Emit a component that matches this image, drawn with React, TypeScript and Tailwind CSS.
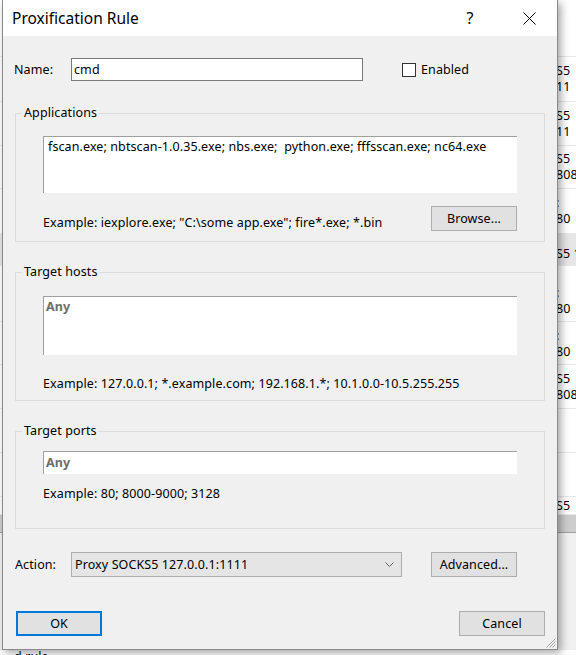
import React from "react";

type Row = { h: number; a?: string; b?: string; band?: boolean; end?: boolean };

// rows of the window behind the dialog (only its right edge shows)
const backRows: Row[] = [
  { h: 57 },
  { h: 45, a: "S5", b: "11" },
  { h: 44, a: "S5", b: "11" },
  { h: 43, a: "S5", b: "808" },
  { h: 45, a: ":", b: "80" },
  { h: 32, a: "S5 1", band: true },
  { h: 56, a: ":", b: "80", end: true },
  { h: 43, a: ":", b: "80", end: true },
  { h: 44, a: "S5", b: "808" },
  { h: 44 },
  { h: 44 },
  { h: 18, a: "S5" },
];

function Button({ label, primary, className = "" }: { label: string; primary?: boolean; className?: string }) {
  return (
    <div
      className={`flex h-[25px] w-[86px] items-center justify-center bg-[#e1e1e1] text-black ${
        primary ? "border-2 border-[#0078d7]" : "border border-[#adadad]"
      } ${className}`}
    >
      {label}
    </div>
  );
}

function Group({ title, children, className = "" }: { title: string; children: React.ReactNode; className?: string }) {
  return (
    <fieldset className={`mx-[12px] border border-[#dcdcdc] px-[27px] ${className}`}>
      <legend className="ml-[-21px] px-[2px] leading-[16px] text-black">{title}</legend>
      {children}
    </fieldset>
  );
}

export default function App() {
  return (
    <div className="relative h-[655px] w-[576px] overflow-hidden bg-white font-['Noto_Sans',sans-serif] text-[12.5px] leading-[16px] tracking-[0.1px] text-black">
      {/* window behind */}
      <div className="flex h-[650px] flex-col">
        {backRows.map((r, i) => (
          <div
            key={i}
            style={{ height: r.h }}
            className={`flex shrink-0 flex-col whitespace-nowrap border-b border-[#e8e8e8] pl-[556px] ${
              r.band ? "justify-end bg-[#e6e6e6] pb-[3px]" : r.end ? "justify-end pb-[4px]" : "justify-center"
            }`}
          >
            {r.a && <span>{r.a}</span>}
            {r.b && <span>{r.b}</span>}
          </div>
        ))}
        <div className="h-[17px] shrink-0 bg-[#cdcdcd]" />
        <div className="flex-1 border-t border-[#a0a0a0] bg-[#f0f0f0]" />
      </div>
      <div className="pl-[14px] leading-[14px]">d rule.</div>

      {/* dialog */}
      <div className="absolute left-[2px] top-0 flex h-[650px] w-[556px] flex-col border-x border-b border-[#8a8a8a] bg-[#f0f0f0] shadow-[3px_3px_8px_rgba(0,0,0,0.35)]">
        <div className="flex h-[36px] shrink-0 items-center bg-white pl-[9px] pr-[5px]">
          <span className="flex-1 text-[15.5px] tracking-normal">Proxification Rule</span>
          <span className="flex w-[46px] justify-center text-[16px]">?</span>
          <span className="ml-[13px] flex w-[46px] justify-center">
            <svg width="13" height="13" viewBox="0 0 13 13">
              <path d="M0.5 0.5 L12.5 12.5 M12.5 0.5 L0.5 12.5" stroke="#000" strokeWidth="1" />
            </svg>
          </span>
        </div>

        <div className="mt-[22px] flex h-[23px] items-center pl-[11px]">
          <span className="w-[57px]">Name:</span>
          <div className="flex h-[23px] w-[292px] items-center border border-[#7a7a7a] bg-white px-[2px]">cmd</div>
          <div className="ml-[39px] h-[14px] w-[14px] border border-[#333] bg-white" />
          <span className="ml-[5px]">Enabled</span>
        </div>

        <Group title="Applications" className="mt-[24px] pb-[10px]">
          <div className="mt-[15px] h-[57px] border-l border-t border-[#a0a0a0] bg-white px-[4px] pt-[2px]">
            fscan.exe; nbtscan-1.0.35.exe; nbs.exe;&nbsp; python.exe; fffsscan.exe; nc64.exe
          </div>
          <div className="mt-[13px] flex items-end justify-between">
            <span>Example: iexplore.exe; "C:\some app.exe"; fire*.exe; *.bin</span>
            <Button label="Browse..." />
          </div>
        </Group>

        <Group title="Target hosts" className="mt-[22px] pb-[8px]">
          <div className="mt-[16px] h-[59px] border-l border-t border-[#a0a0a0] bg-white px-[2px] pt-[2px] font-bold text-[#6d6d6d]">
            Any
          </div>
          <div className="mt-[21px]">Example: 127.0.0.1; *.example.com; 192.168.1.*; 10.1.0.0-10.5.255.255</div>
        </Group>

        <Group title="Target ports" className="mt-[22px] pb-[26px]">
          <div className="mt-[12px] flex h-[23px] items-center border-l border-t border-[#a0a0a0] bg-white px-[2px] font-bold text-[#6d6d6d]">
            Any
          </div>
          <div className="mt-[12px]">Example: 80; 8000-9000; 3128</div>
        </Group>

        <div className="mt-[23px] flex items-center pl-[12px]">
          <span className="w-[56px]">Action:</span>
          <div className="flex h-[25px] w-[331px] items-center border border-[#adadad] bg-[#e5e5e5] pl-[3px] pr-[7px]">
            <span className="flex-1">Proxy SOCKS5 127.0.0.1:1111</span>
            <svg width="9" height="5" viewBox="0 0 9 5">
              <path d="M0.5 0.5 L4.5 4.5 L8.5 0.5" fill="none" stroke="#606060" strokeWidth="1" />
            </svg>
          </div>
          <Button label="Advanced..." className="ml-[29px]" />
        </div>

        <div className="mt-[34px] flex justify-between pl-[13px] pr-[12px]">
          <Button label="OK" primary />
          <Button label="Cancel" />
        </div>

        <svg className="absolute bottom-[1px] right-[1px]" width="11" height="11" viewBox="0 0 11 11">
          <path d="M10.5 1.5 L1.5 10.5 M10.5 4.5 L4.5 10.5 M10.5 7.5 L7.5 10.5" stroke="#a0a0a0" strokeWidth="1" />
        </svg>
      </div>
    </div>
  );
}
